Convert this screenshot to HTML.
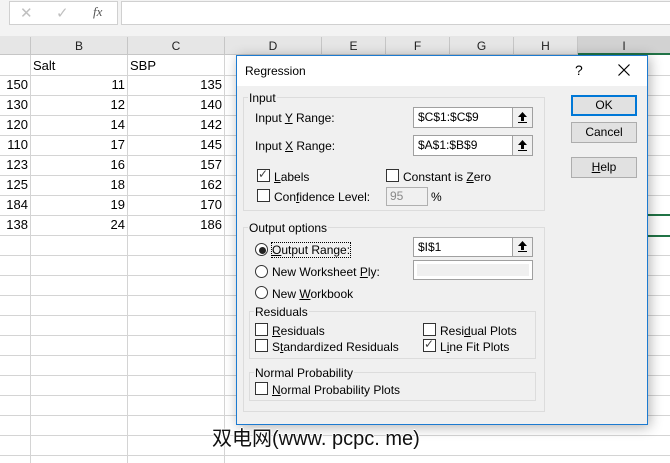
<!DOCTYPE html>
<html><head><meta charset="utf-8"><style>
*{margin:0;padding:0;box-sizing:border-box}
body{width:670px;height:463px;overflow:hidden;background:#fff;font-family:"Liberation Sans",sans-serif;font-size:12px;color:#000;position:relative}
.a{position:absolute}
.hl{position:absolute;left:0;width:670px;height:1px;background:#d4d4d4}
.vl{position:absolute;top:55px;height:408px;width:1px;background:#d4d4d4}
.ch{position:absolute;top:37px;height:18px;text-align:center;line-height:18px;font-size:12px;color:#222}
.n{position:absolute;text-align:right;font-size:13px;line-height:20px}
.t{position:absolute;font-size:12px;line-height:14px;white-space:nowrap;color:#000}
.cb{position:absolute;width:13px;height:13px;border:1px solid #333;background:#fff}
.rb{position:absolute;width:13px;height:13px;border:1px solid #333;border-radius:50%;background:#fff}
.grp{position:absolute;border:1px solid #dcdcdc}
.gl{position:absolute;background:#f0f0f0;padding:0 1px;font-size:12px;line-height:14px}
.inp{position:absolute;width:120px;height:21px;border:1px solid #a0a0a0;background:#fff;font-size:12px;line-height:19px;padding-left:4px}
.up{position:absolute;right:0;top:0;width:20px;height:19px;background:#f0f0f0;border-left:1px solid #a0a0a0}
.up svg{position:absolute;left:5px;top:4px}
.btn{position:absolute;left:571px;width:66px;height:21px;background:#e1e1e1;border:1px solid #adadad;text-align:center;line-height:19px;font-size:12px}
u{text-decoration:underline}
</style></head><body>
<div class="a" style="left:0;top:0;width:670px;height:37px;background:#f3f3f3"></div>
<div class="a" style="left:9px;top:1px;width:109px;height:24px;background:#fff;border:1px solid #d0d0d0"></div>
<div class="a" style="left:20px;top:4px;color:#c0c0c0;font-size:15px">✕</div>
<div class="a" style="left:56px;top:4px;color:#c0c0c0;font-size:15px">✓</div>
<div class="a" style="left:93px;top:4px;color:#555;font-size:13px;font-style:italic;font-family:'Liberation Serif',serif">fx</div>
<div class="a" style="left:121px;top:1px;width:560px;height:24px;background:#fff;border:1px solid #d0d0d0"></div>
<div class="a" style="left:0;top:36px;width:670px;height:19px;background:#e6e6e6;border-bottom:1px solid #c6c6c6"></div>
<div class="a" style="left:577px;top:36px;width:93px;height:19px;background:#d2d2d2;border-bottom:2px solid #217346"></div>
<div class="a" style="left:30px;top:37px;width:1px;height:18px;background:#c6c6c6"></div>
<div class="a" style="left:127px;top:37px;width:1px;height:18px;background:#c6c6c6"></div>
<div class="a" style="left:224px;top:37px;width:1px;height:18px;background:#c6c6c6"></div>
<div class="a" style="left:321px;top:37px;width:1px;height:18px;background:#c6c6c6"></div>
<div class="a" style="left:385px;top:37px;width:1px;height:18px;background:#c6c6c6"></div>
<div class="a" style="left:449px;top:37px;width:1px;height:18px;background:#c6c6c6"></div>
<div class="a" style="left:513px;top:37px;width:1px;height:18px;background:#c6c6c6"></div>
<div class="a" style="left:577px;top:37px;width:1px;height:18px;background:#c6c6c6"></div>
<div class="ch" style="left:31px;width:96px">B</div>
<div class="ch" style="left:128px;width:96px">C</div>
<div class="ch" style="left:225px;width:96px">D</div>
<div class="ch" style="left:322px;width:63px">E</div>
<div class="ch" style="left:386px;width:63px">F</div>
<div class="ch" style="left:450px;width:63px">G</div>
<div class="ch" style="left:514px;width:63px">H</div>
<div class="ch" style="left:578px;width:92px">I</div>
<div class="hl" style="top:75px"></div><div class="hl" style="top:95px"></div><div class="hl" style="top:115px"></div>
<div class="hl" style="top:135px"></div><div class="hl" style="top:155px"></div><div class="hl" style="top:175px"></div>
<div class="hl" style="top:195px"></div><div class="hl" style="top:215px"></div><div class="hl" style="top:235px"></div>
<div class="hl" style="top:255px"></div><div class="hl" style="top:275px"></div><div class="hl" style="top:295px"></div>
<div class="hl" style="top:315px"></div><div class="hl" style="top:335px"></div><div class="hl" style="top:355px"></div>
<div class="hl" style="top:375px"></div><div class="hl" style="top:395px"></div><div class="hl" style="top:415px"></div>
<div class="hl" style="top:435px"></div><div class="hl" style="top:455px"></div>
<div class="vl" style="left:30px"></div><div class="vl" style="left:127px"></div><div class="vl" style="left:224px"></div>
<div class="a" style="left:636px;top:214px;width:34px;height:2px;background:#217346"></div>
<div class="a" style="left:636px;top:235px;width:34px;height:2px;background:#217346"></div>
<div class="t" style="left:33px;top:58px;font-size:13px;line-height:16px">Salt</div>
<div class="t" style="left:130px;top:58px;font-size:13px;line-height:16px">SBP</div>
<div class="n" style="left:0;top:75px;width:28px">150</div><div class="n" style="left:31px;top:75px;width:94px">11</div><div class="n" style="left:128px;top:75px;width:94px">135</div>
<div class="n" style="left:0;top:95px;width:28px">130</div><div class="n" style="left:31px;top:95px;width:94px">12</div><div class="n" style="left:128px;top:95px;width:94px">140</div>
<div class="n" style="left:0;top:115px;width:28px">120</div><div class="n" style="left:31px;top:115px;width:94px">14</div><div class="n" style="left:128px;top:115px;width:94px">142</div>
<div class="n" style="left:0;top:135px;width:28px">110</div><div class="n" style="left:31px;top:135px;width:94px">17</div><div class="n" style="left:128px;top:135px;width:94px">145</div>
<div class="n" style="left:0;top:155px;width:28px">123</div><div class="n" style="left:31px;top:155px;width:94px">16</div><div class="n" style="left:128px;top:155px;width:94px">157</div>
<div class="n" style="left:0;top:175px;width:28px">125</div><div class="n" style="left:31px;top:175px;width:94px">18</div><div class="n" style="left:128px;top:175px;width:94px">162</div>
<div class="n" style="left:0;top:195px;width:28px">184</div><div class="n" style="left:31px;top:195px;width:94px">19</div><div class="n" style="left:128px;top:195px;width:94px">170</div>
<div class="n" style="left:0;top:215px;width:28px">138</div><div class="n" style="left:31px;top:215px;width:94px">24</div><div class="n" style="left:128px;top:215px;width:94px">186</div>
<div class="a" style="left:236px;top:55px;width:412px;height:370px;background:#f0f0f0;border:1px solid #1c7ad0;box-shadow:2px 2px 12px rgba(0,0,0,0.3)"></div>
<div class="a" style="left:237px;top:56px;width:410px;height:30px;background:#fff"></div>
<div class="t" style="left:245px;top:64px">Regression</div>
<div class="t" style="left:575px;top:63px;font-size:14px">?</div>
<svg class="a" style="left:618px;top:64px" width="12" height="12"><path d="M0.5 0.5L11.5 11.5M11.5 0.5L0.5 11.5" stroke="#000" stroke-width="1.2"/></svg>
<div class="grp" style="left:243px;top:97px;width:302px;height:114px"></div>
<div class="gl" style="left:248px;top:91px">Input</div>
<div class="t" style="left:255px;top:111px">Input <u>Y</u> Range:</div>
<div class="inp" style="left:413px;top:107px">$C$1:$C$9<div class="up"><svg width="9" height="11"><path d="M4.5 0L0 5H3V9H6V5H9Z M0 10H9V11H0Z" fill="#000"/></svg></div></div>
<div class="t" style="left:255px;top:139px">Input <u>X</u> Range:</div>
<div class="inp" style="left:413px;top:135px">$A$1:$B$9<div class="up"><svg width="9" height="11"><path d="M4.5 0L0 5H3V9H6V5H9Z M0 10H9V11H0Z" fill="#000"/></svg></div></div>
<div class="cb" style="left:257px;top:169px"></div><div class="t" style="left:258px;top:167px;color:#444">✓</div>
<div class="t" style="left:274px;top:170px"><u>L</u>abels</div>
<div class="cb" style="left:386px;top:169px"></div>
<div class="t" style="left:403px;top:170px">Constant is <u>Z</u>ero</div>
<div class="cb" style="left:257px;top:189px"></div>
<div class="t" style="left:274px;top:190px">Con<u>f</u>idence Level:</div>
<div class="a" style="left:386px;top:187px;width:42px;height:19px;border:1px solid #b0b0b0;background:#f0f0f0;color:#888;padding-left:3px;line-height:17px">95</div>
<div class="t" style="left:431px;top:190px">%</div>
<div class="btn" style="top:95px;border:2px solid #0078d7;line-height:17px">OK</div>
<div class="btn" style="top:122px">Cancel</div>
<div class="btn" style="top:157px"><u>H</u>elp</div>
<div class="grp" style="left:243px;top:227px;width:302px;height:185px"></div>
<div class="gl" style="left:248px;top:221px">Output options</div>
<div class="rb" style="left:255px;top:243px"></div><div class="a" style="left:259px;top:247px;width:7px;height:7px;border-radius:50%;background:#222"></div>
<div class="t" style="left:272px;top:243px;outline:1px dotted #000"><u>O</u>utput Range:</div>
<div class="inp" style="left:413px;top:237px;height:20px;line-height:18px">$I$1<div class="up" style="height:18px"><svg width="9" height="11" style="top:3px"><path d="M4.5 0L0 5H3V9H6V5H9Z M0 10H9V11H0Z" fill="#000"/></svg></div></div>
<div class="rb" style="left:255px;top:265px"></div>
<div class="t" style="left:272px;top:265px">New Worksheet <u>P</u>ly:</div>
<div class="a" style="left:413px;top:260px;width:120px;height:20px;border:1px solid #a0a0a0;background:#fff"><div class="a" style="left:3px;top:3px;width:112px;height:12px;background:#f0f0f0"></div></div>
<div class="rb" style="left:255px;top:286px"></div>
<div class="t" style="left:272px;top:287px">New <u>W</u>orkbook</div>
<div class="grp" style="left:249px;top:311px;width:287px;height:48px"></div>
<div class="gl" style="left:254px;top:305px">Residuals</div>
<div class="cb" style="left:255px;top:323px"></div><div class="t" style="left:272px;top:324px"><u>R</u>esiduals</div>
<div class="cb" style="left:255px;top:339px"></div><div class="t" style="left:272px;top:340px">S<u>t</u>andardized Residuals</div>
<div class="cb" style="left:423px;top:323px"></div><div class="t" style="left:440px;top:324px">Resi<u>d</u>ual Plots</div>
<div class="cb" style="left:423px;top:339px"></div><div class="t" style="left:424px;top:337px;color:#444">✓</div><div class="t" style="left:440px;top:340px">L<u>i</u>ne Fit Plots</div>
<div class="grp" style="left:249px;top:372px;width:287px;height:29px"></div>
<div class="gl" style="left:254px;top:366px">Normal Probability</div>
<div class="cb" style="left:255px;top:382px"></div><div class="t" style="left:272px;top:383px"><u>N</u>ormal Probability Plots</div>
<div class="a" style="left:212px;top:427px;font-size:20px;line-height:24px;white-space:nowrap;font-family:'Liberation Sans','Noto Sans CJK SC',sans-serif;color:#111;text-shadow:1px 0 #fff,-1px 0 #fff,0 1px #fff,0 -1px #fff">双电网(www. pcpc. me)</div>
</body></html>
